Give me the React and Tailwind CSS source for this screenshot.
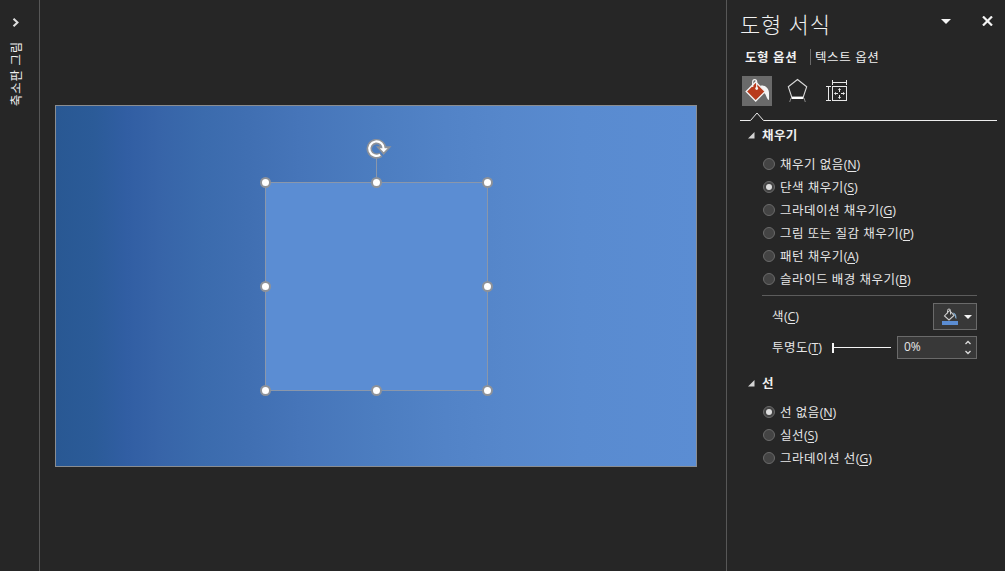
import React from "react";

const FILLS = [
  ["채우기 없음", "N"],
  ["단색 채우기", "S"],
  ["그라데이션 채우기", "G"],
  ["그림 또는 질감 채우기", "P"],
  ["패턴 채우기", "A"],
  ["슬라이드 배경 채우기", "B"],
];

const LINES = [
  ["선 없음", "N"],
  ["실선", "S"],
  ["그라데이션 선", "G"],
];

function Label({ text, hotkey }) {
  return (
    <span className="block whitespace-nowrap text-[12.5px] leading-[22px] text-[#e6e6e6]">
      <span className="tracking-[0.5px]">{text}</span>
      <span className="tracking-[-0.2px]">
        (<span className="underline decoration-1 underline-offset-2">{hotkey}</span>)
      </span>
    </span>
  );
}

function RadioList({ items, selected }) {
  return (
    <div className="flex flex-col pl-[36px]">
      {items.map(([text, hotkey], i) => (
        <div key={text} className="flex h-[23px] items-start gap-[5px]">
          <span className="mt-[5px] flex size-3 shrink-0 items-center justify-center rounded-full border border-[#6a6a6a] bg-[#444444]">
            {i === selected && <span className="size-[6px] rounded-full bg-[#dedede]" />}
          </span>
          <div className="pt-px">
            <Label text={text} hotkey={hotkey} />
          </div>
        </div>
      ))}
    </div>
  );
}

function SectionTitle({ children }) {
  return (
    <div className="flex h-6 items-center gap-[7px] pl-[21px] text-[12.5px] font-bold leading-6 tracking-[0.4px] text-[#f0f0f0]">
      <svg width="7" height="7" viewBox="0 0 7 7">
        <path d="M6.5 0V6.5H0Z" fill="#d4d4d4" />
      </svg>
      <span className="pt-[2px]">{children}</span>
    </div>
  );
}

function Handle({ place }) {
  return (
    <span
      className={`absolute size-[11px] rounded-full border-2 border-[#8e9299] bg-white ${place}`}
    />
  );
}

function Slide() {
  return (
    <div className="relative h-[362px] w-[642px] border border-[#8a8d91] bg-[linear-gradient(90deg,#295893_0%,#2b5b98_6%,#315ea3_11%,#3764a8_16%,#3b6bad_23%,#406fb2_30%,#4675b9_38%,#4c7dc0_50%,#5283c7_61%,#5687cb_70%,#598bd0_82%,#5b8dd3_100%)]">
      <div className="absolute left-[209px] top-[76px] h-[209px] w-[223px] border border-[#8a97ab] bg-[#5b8dd3]">
        <span className="absolute left-[110px] top-[-25px] h-[25px] w-px bg-[#8a97ab]" />
        <Handle place="-left-[6px] -top-[6px]" />
        <Handle place="left-[105px] -top-[6px]" />
        <Handle place="left-[216px] -top-[6px]" />
        <Handle place="-left-[6px] top-[98px]" />
        <Handle place="left-[216px] top-[98px]" />
        <Handle place="-left-[6px] top-[202px]" />
        <Handle place="left-[105px] top-[202px]" />
        <Handle place="left-[216px] top-[202px]" />
        <svg className="absolute left-[99px] top-[-46px]" width="28" height="24" viewBox="0 0 28 24">
          <g fill="none">
            <path d="M15.8 17.6A7.2 7.2 0 1 1 18.7 12" stroke="#8e9299" strokeWidth="5.4" />
            <path d="M11 9.3H26.5L18.6 18Z" fill="#8e9299" />
            <path d="M15.2 17.8A7.2 7.2 0 1 1 18.7 12" stroke="#fff" strokeWidth="2.2" />
            <path d="M14.8 11.2H22.6L18.7 15.2Z" fill="#fff" />
          </g>
        </svg>
      </div>
    </div>
  );
}

function FillIcon() {
  return (
    <svg width="30" height="30" viewBox="0 0 30 30">
      <rect width="30" height="30" fill="#6a6a6a" />
      <path d="M18.5 9.5C23 8.8 27 12 27 17V24C25.5 24 24.5 20.5 23.2 18L19 14Z" fill="#f4f4f4" />
      <path d="M13.7 6L23.2 15.5L13.7 25L4.2 15.5Z" fill="#b83b1d" stroke="#f4f4f4" strokeWidth="1.3" />
      <path d="M10.7 11V6Q10.7 3.7 12.7 3.7Q14.7 3.7 14.7 6V12.3" fill="none" stroke="#f4f4f4" strokeWidth="1.2" />
      <circle cx="14.7" cy="12.5" r="1.4" fill="#f4f4f4" />
    </svg>
  );
}

function EffectsIcon() {
  return (
    <svg width="22" height="25" viewBox="0 0 22 25" fill="none">
      <path d="M11.5 1.5L20.7 8.7L17.3 19H5.7L2.3 8.7Z" stroke="#d9d9d9" strokeWidth="1.1" />
      <path d="M5.5 20H17.5" stroke="#fff" strokeWidth="2" />
      <path d="M5 20L3.7 24M18 20L19.3 24" stroke="#8a8a8a" />
    </svg>
  );
}

function SizeIcon() {
  return (
    <svg width="22" height="22" viewBox="0 0 22 22" fill="none" stroke="#e8e8e8">
      <path d="M6.5 2.5H20.5M6.5 0V5M20.5 0V5M2.5 6.5V20.5M0 6.5H5M0 20.5H5" />
      <rect x="6.5" y="6.5" width="14" height="14" />
      <path d="M13.5 8.5V12M13.5 15V18.5M8.5 13.5H12M15 13.5H18.5" />
      <path d="M12 10L13.5 8.5L15 10M12 17L13.5 18.5L15 17M10 12L8.5 13.5L10 15M17 12L18.5 13.5L17 15" strokeWidth=".7" />
    </svg>
  );
}

function FormatPane() {
  return (
    <aside className="flex h-full w-[279px] shrink-0 flex-col border-l border-[#575757]">
      <header className="flex h-[48px] items-start pl-[13px] pr-[12px]">
        <h1 className="mt-[8px] flex-1 whitespace-nowrap text-[22px] font-light leading-[32px] tracking-[0.8px] text-[#f0f0f0]">
          도형 서식
        </h1>
        <svg className="mr-[31px] mt-[19px]" width="10" height="5" viewBox="0 0 10 5">
          <path d="M0 0H10L5 5Z" fill="#f4f4f4" />
        </svg>
        <svg className="mt-[16px]" width="11" height="10" viewBox="0 0 11 10">
          <path d="M1 .5L10 9.5M10 .5L1 9.5" stroke="#f4f4f4" strokeWidth="2.2" />
        </svg>
      </header>
      <nav className="flex h-[18px] items-center whitespace-nowrap pl-[18px] text-[12.5px] leading-[18px] tracking-[0.6px] text-[#f0f0f0]">
        <span className="w-[65px] pt-[2px] font-bold">도형 옵션</span>
        <span className="h-4 w-px bg-[#6a6a6a]" />
        <span className="pl-[4px] pt-[2px]">텍스트 옵션</span>
      </nav>
      <div className="flex h-[46px] items-start pl-[15px] pt-[10px]">
        <FillIcon />
        <div className="ml-[14px] mt-[2px]">
          <EffectsIcon />
        </div>
        <div className="ml-[18px] mt-[4px]">
          <SizeIcon />
        </div>
      </div>
      <svg className="ml-[13px] block" width="257" height="10" viewBox="0 0 257 10" fill="none">
        <path d="M0 8.5H10.5L17 1L23.5 8.5H257" stroke="#ededed" />
      </svg>
      <div className="h-[31px] pt-[1px]">
        <SectionTitle>채우기</SectionTitle>
      </div>
      <RadioList items={FILLS} selected={1} />
      <div className="ml-[35px] mt-[4px] h-px w-[215px] bg-[#5c5c5c]" />
      <div className="ml-[45px] mt-[7px] flex h-[27px] w-[205px] items-center justify-between">
        <Label text="색" hotkey="C" />
        <div className="flex h-[27px] w-[44px] items-center border border-[#6a6a6a] bg-[#383838] pl-[8px]">
          <svg width="16" height="18" viewBox="0 0 16 18">
            <path d="M7.5 2.5L12 7.5L7 12L2.5 8Z" fill="none" stroke="#cfcfcf" strokeWidth="1.1" />
            <path d="M5.5 5.5V2.5Q5.5 1 7 1Q8.5 1 8.5 2.5V6.5" fill="none" stroke="#cfcfcf" />
            <path d="M10.5 4.5Q14.8 4.5 14.5 11Q12.7 10.5 12.8 7.5Z" fill="#7fa7ca" />
            <path d="M0 13H16V17H0Z" fill="#5b8dd3" />
          </svg>
          <svg className="ml-[6px]" width="8" height="4" viewBox="0 0 8 4">
            <path d="M0 0H8L4 4Z" fill="#f4f4f4" />
          </svg>
        </div>
      </div>
      <div className="ml-[45px] mt-[6px] flex h-[23px] w-[205px] items-center">
        <div className="w-[60px]">
          <Label text="투명도" hotkey="T" />
        </div>
        <div className="flex w-[59px] items-center">
          <span className="h-[10px] w-[2px] bg-[#f4f4f4]" />
          <span className="h-px flex-1 bg-[#f4f4f4]" />
        </div>
        <div className="ml-auto flex h-[23px] w-[80px] items-center justify-between border border-[#6a6a6a] bg-[#383838] pl-[6px] pr-[5px]">
          <span className="pb-px text-[12px] leading-[20px] text-[#e6e6e6]">0%</span>
          <svg width="6" height="15" viewBox="0 0 6 15" fill="none" stroke="#dddddd" strokeWidth="1.3">
            <path d="M.5 4L3 1.5L5.5 4M.5 11L3 13.5L5.5 11" />
          </svg>
        </div>
      </div>
      <div className="h-[42px] pt-[12px]">
        <SectionTitle>선</SectionTitle>
      </div>
      <RadioList items={LINES} selected={0} />
    </aside>
  );
}

export default function App() {
  return (
    <div className="flex h-[571px] w-[1005px] overflow-hidden bg-[#262626] font-['Open_Sans','Noto_Sans_CJK_KR',sans-serif]">
      <aside className="flex w-[40px] shrink-0 flex-col items-center border-r border-[#575757] pr-[8px] pt-[18px]">
        <svg width="8" height="9" viewBox="0 0 8 9" fill="none">
          <path d="M1.5 .7L5.5 4.5L1.5 8.3" stroke="#dedede" strokeWidth="2" />
        </svg>
        <span className="ml-[2px] mt-[14px] rotate-180 whitespace-nowrap text-[12.5px] leading-[18px] tracking-[0.7px] text-[#f0f0f0] [text-orientation:sideways] [writing-mode:vertical-rl]">
          축소판 그림
        </span>
      </aside>
      <main className="flex min-w-0 flex-1 items-start pl-[15px] pt-[105px]">
        <Slide />
      </main>
      <FormatPane />
    </div>
  );
}
